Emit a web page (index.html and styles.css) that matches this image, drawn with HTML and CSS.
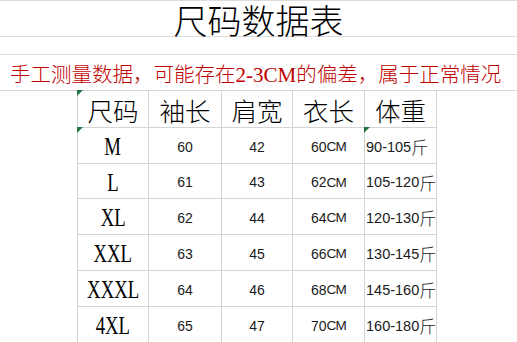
FILE: index.html
```html
<!DOCTYPE html>
<html lang="zh-CN">
<head>
<meta charset="utf-8">
<title>尺码数据表</title>
<link rel="stylesheet" href="styles.css">
</head>
<body>
<div class="sheet">
  <div class="title-row"><h1 class="title">尺码数据表</h1></div>
  <div class="blank-row"></div>
  <div class="note-row"><p class="note">手工测量数据，可能存在<span class="latin">2-3CM</span>的偏差，属于正常情况</p></div>
  <div class="grid">
    <div class="cell head flag">尺码</div>
    <div class="cell head">袖长</div>
    <div class="cell head">肩宽</div>
    <div class="cell head">衣长</div>
    <div class="cell head">体重</div>

    <div class="cell size flag"><span class="letters">M</span></div>
    <div class="cell num">60</div>
    <div class="cell num">42</div>
    <div class="cell num">60<span class="cm">CM</span></div>
    <div class="cell weight flag">90-105<span class="jin">斤</span></div>

    <div class="cell size"><span class="letters">L</span></div>
    <div class="cell num">61</div>
    <div class="cell num">43</div>
    <div class="cell num">62<span class="cm">CM</span></div>
    <div class="cell weight">105-120<span class="jin">斤</span></div>

    <div class="cell size"><span class="letters">XL</span></div>
    <div class="cell num">62</div>
    <div class="cell num">44</div>
    <div class="cell num">64<span class="cm">CM</span></div>
    <div class="cell weight">120-130<span class="jin">斤</span></div>

    <div class="cell size"><span class="letters">XXL</span></div>
    <div class="cell num">63</div>
    <div class="cell num">45</div>
    <div class="cell num">66<span class="cm">CM</span></div>
    <div class="cell weight">130-145<span class="jin">斤</span></div>

    <div class="cell size"><span class="letters">XXXL</span></div>
    <div class="cell num">64</div>
    <div class="cell num">46</div>
    <div class="cell num">68<span class="cm">CM</span></div>
    <div class="cell weight">145-160<span class="jin">斤</span></div>

    <div class="cell size"><span class="letters">4XL</span></div>
    <div class="cell num">65</div>
    <div class="cell num">47</div>
    <div class="cell num">70<span class="cm">CM</span></div>
    <div class="cell weight">160-180<span class="jin">斤</span></div>
  </div>
</div>
</body>
</html>
```

FILE: styles.css
```css
html, body {
  margin: 0;
  padding: 0;
  background: #ffffff;
  overflow: hidden;
}

body {
  font-family: "Noto Sans CJK SC", sans-serif;
  color: #000;
}

.sheet {
  width: 517px;
}

.title-row {
  box-sizing: border-box;
  height: 37px;
  border-top: 1px solid #dcdcdc;
  border-bottom: 1px solid #dcdcdc;
  display: flex;
  justify-content: center;
}

.title {
  margin: 0;
  padding-top: 3px;
  font-size: 34px;
  font-weight: 300;
  line-height: 32px;
  color: #000;
}

.blank-row {
  height: 17px;
  border-bottom: 1px solid #dcdcdc;
}

.note-row {
  height: 35px;
  border-bottom: 1px solid #d6d6d6;
}

.note {
  margin: 0;
  padding: 1px 0 0 10px;
  font-size: 20.5px;
  font-weight: 300;
  line-height: 34px;
  color: #c00000;
  white-space: nowrap;
}

.latin {
  font-family: "Liberation Serif", serif;
  font-size: 21px;
}

.grid {
  display: grid;
  grid-template-columns: 71px 73px 71px 72px 72px;
  grid-template-rows: 37px 36px 35px 36px 36px 36px 36px;
  width: 359px;
  margin-left: 77px;
  border-left: 1px solid #d4d4d4;
}

.cell {
  position: relative;
  box-sizing: border-box;
  border-right: 1px solid #d4d4d4;
  border-bottom: 1px solid #d4d4d4;
  display: flex;
  align-items: center;
  justify-content: center;
  white-space: nowrap;
}

.head {
  font-size: 25.5px;
  font-weight: 300;
  padding-top: 1px;
}

.size {
  padding-top: 3px;
}

.letters {
  display: inline-block;
  font-family: "Liberation Serif", serif;
  font-size: 26px;
  transform: scaleX(0.72);
}

.num {
  font-family: "Liberation Sans", sans-serif;
  font-size: 14px;
  color: #1a1a1a;
  padding-top: 2px;
}

.cm {
  font-size: 13.5px;
  letter-spacing: -0.8px;
}

.weight {
  justify-content: flex-start;
  padding: 2px 0 0 1px;
  font-family: "Liberation Sans", sans-serif;
  font-size: 14.5px;
  color: #1a1a1a;
}

.jin {
  font-family: "Noto Sans CJK SC", sans-serif;
  font-size: 17px;
  font-weight: 300;
}

.flag::before {
  content: "";
  position: absolute;
  left: -1px;
  top: -1px;
  border-top: 6px solid #217346;
  border-right: 6px solid transparent;
}
```
